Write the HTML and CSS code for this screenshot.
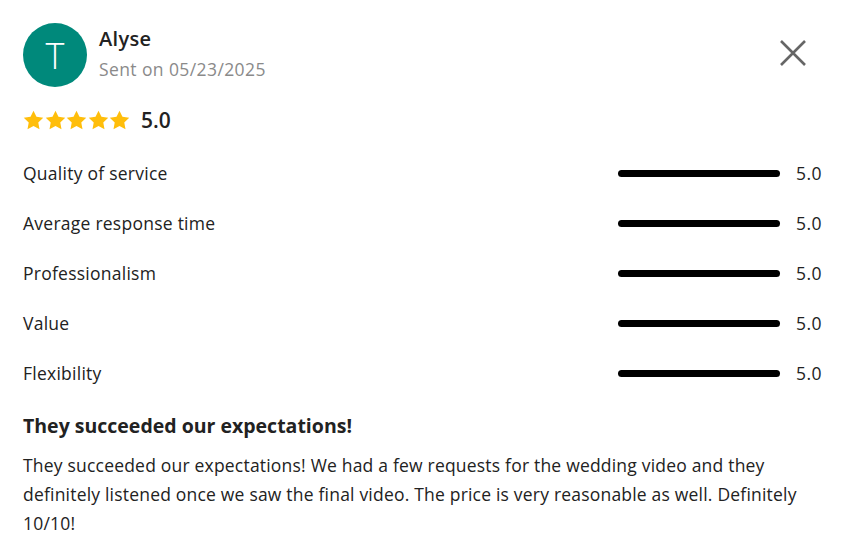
FILE: index.html
```html
<!DOCTYPE html>
<html>
<head>
<meta charset="utf-8">
<link rel="stylesheet" href="styles.css">
</head>
<body>
<div class="review">
  <div class="header">
    <div class="avatar">T</div>
    <div class="who">
      <div class="name">Alyse</div>
      <div class="sent">Sent on 05/23/2025</div>
    </div>
    <button class="close" aria-label="Close">
      <svg width="26" height="26" viewBox="0 0 26 26"><path d="M1 1 L25 25 M25 1 L1 25" stroke="#666" stroke-width="2.6" fill="none"/></svg>
    </button>
  </div>
  <div class="overall">
    <div class="stars">
      <svg width="21" height="20" viewBox="0 0 24 23"><path d="M12 0.8l3.4 7.1 7.8 1-5.7 5.4 1.4 7.7L12 18.3 5.1 22l1.4-7.7L0.8 8.9l7.8-1z" fill="#FFBE0B"/></svg>
      <svg width="21" height="20" viewBox="0 0 24 23"><path d="M12 0.8l3.4 7.1 7.8 1-5.7 5.4 1.4 7.7L12 18.3 5.1 22l1.4-7.7L0.8 8.9l7.8-1z" fill="#FFBE0B"/></svg>
      <svg width="21" height="20" viewBox="0 0 24 23"><path d="M12 0.8l3.4 7.1 7.8 1-5.7 5.4 1.4 7.7L12 18.3 5.1 22l1.4-7.7L0.8 8.9l7.8-1z" fill="#FFBE0B"/></svg>
      <svg width="21" height="20" viewBox="0 0 24 23"><path d="M12 0.8l3.4 7.1 7.8 1-5.7 5.4 1.4 7.7L12 18.3 5.1 22l1.4-7.7L0.8 8.9l7.8-1z" fill="#FFBE0B"/></svg>
      <svg width="21" height="20" viewBox="0 0 24 23"><path d="M12 0.8l3.4 7.1 7.8 1-5.7 5.4 1.4 7.7L12 18.3 5.1 22l1.4-7.7L0.8 8.9l7.8-1z" fill="#FFBE0B"/></svg>
    </div>
    <span class="score">5.0</span>
  </div>
  <div class="ratings">
    <div class="row"><span class="label">Quality of service</span><span class="bar"></span><span class="val">5.0</span></div>
    <div class="row"><span class="label">Average response time</span><span class="bar"></span><span class="val">5.0</span></div>
    <div class="row"><span class="label">Professionalism</span><span class="bar"></span><span class="val">5.0</span></div>
    <div class="row"><span class="label">Value</span><span class="bar"></span><span class="val">5.0</span></div>
    <div class="row"><span class="label">Flexibility</span><span class="bar"></span><span class="val">5.0</span></div>
  </div>
  <h2 class="title">They succeeded our expectations!</h2>
  <p class="body">They succeeded our expectations! We had a few requests for the wedding video and they definitely listened once we saw the final video. The price is very reasonable as well. Definitely 10/10!</p>
</div>
</body>
</html>
```
FILE: styles.css
```css
html, body { margin: 0; padding: 0; background: #fff; }
body { font-family: "Open Sans", "Liberation Sans", sans-serif; color: #222; }
.review { padding: 23px 24px 0 23px; }
.header { display: flex; align-items: flex-start; }
.avatar {
  width: 64px; height: 64px; border-radius: 50%;
  background: #00897B; color: #fff;
  display: flex; align-items: center; justify-content: center;
  font-size: 36px; font-weight: 300; flex: none;
}
.who { margin-left: 12px; flex: 1; padding-top: 2px; }
.name { font-size: 20px; font-weight: 600; color: #222; line-height: 28px; letter-spacing: 0.3px; }
.sent { font-size: 17.5px; color: #8a8a8a; line-height: 24px; margin-top: 4px; letter-spacing: 0.4px; }
.close { background: none; border: 0; padding: 0; margin: 17px 16px 0 0; cursor: pointer; line-height: 0; }
.overall { display: flex; align-items: center; margin-top: 20px; height: 26px; }
.stars { display: flex; gap: 0.5px; }
.score { font-size: 21px; font-weight: 600; margin-left: 11px; }
.ratings { margin-top: 15px; }
.row { display: flex; align-items: center; height: 50px; }
.label { flex: 1; font-size: 17.5px; letter-spacing: 0.25px; }
.bar { width: 162px; height: 7px; border-radius: 4px; background: #000; }
.val { width: 42px; text-align: right; font-size: 17.5px; letter-spacing: 0.5px; }
.title { font-size: 19.5px; font-weight: 700; margin: 15px 0 0; line-height: 26px; }
.body { font-size: 17.5px; line-height: 29px; margin: 12px 0 0; letter-spacing: 0.2px; }
```
